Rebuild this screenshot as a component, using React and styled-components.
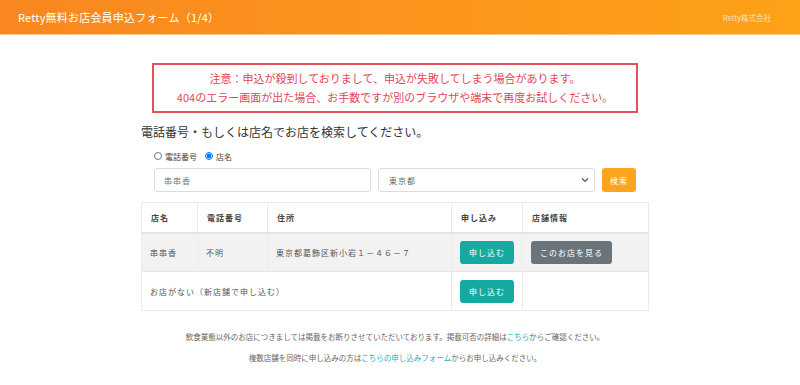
import React from 'react';
import styled, { createGlobalStyle } from 'styled-components';

const GlobalStyle = createGlobalStyle`
  html, body {
    margin: 0;
    padding: 0;
    background: #fff;
  }
  body {
    font-family: "Noto Sans CJK JP", "Noto Sans", "Liberation Sans", sans-serif;
    color: #333;
  }
  * { box-sizing: border-box; }
`;

const shops = [
  { name: '串串香', tel: '不明', address: '東京都葛飾区新小岩１－４６－７' },
];

function App() {
  return (
    <>
      <GlobalStyle />
      <Page>
        <TopBar>
          <Title>Retty無料お店会員申込フォーム（1/4）</Title>
          <Company>Retty株式会社</Company>
        </TopBar>

        <Main>
          <Alert>
            注意：申込が殺到しておりまして、申込が失敗してしまう場合があります。
            <br />
            404のエラー画面が出た場合、お手数ですが別のブラウザや端末で再度お試しください。
          </Alert>

          <Heading>電話番号・もしくは店名でお店を検索してください。</Heading>

          <SearchForm>
            <RadioRow>
              <RadioLabel>
                <Radio type="radio" name="type" value="tel" />
                電話番号
              </RadioLabel>
              <RadioLabel>
                <Radio type="radio" name="type" value="name" defaultChecked />
                店名
              </RadioLabel>
            </RadioRow>
            <FieldRow>
              <TextInput defaultValue="串串香" />
              <SelectBox>
                <span>東京都</span>
                <svg width="8" height="6" viewBox="0 0 8 6">
                  <path d="M1 1.5 L4 4.5 L7 1.5" fill="none" stroke="#555" strokeWidth="1.2" />
                </svg>
              </SelectBox>
              <SearchButton>検索</SearchButton>
            </FieldRow>
          </SearchForm>

          <ShopTable>
            <thead>
              <tr>
                <Th $w={56}>店名</Th>
                <Th $w={70}>電話番号</Th>
                <Th>住所</Th>
                <Th $w={69}>申し込み</Th>
                <Th $w={126}>店舗情報</Th>
              </tr>
            </thead>
            <tbody>
              {shops.map((s) => (
                <Row key={s.name} $striped>
                  <Td>{s.name}</Td>
                  <Td>{s.tel}</Td>
                  <Td>{s.address}</Td>
                  <Td><Button $variant="teal">申し込む</Button></Td>
                  <Td><Button $variant="gray">このお店を見る</Button></Td>
                </Row>
              ))}
              <Row>
                <Td colSpan={3}>お店がない（新店舗で申し込む）</Td>
                <Td><Button $variant="teal">申し込む</Button></Td>
                <Td />
              </Row>
            </tbody>
          </ShopTable>

          <Note>
            飲食業態以外のお店につきましては掲載をお断りさせていただいております。掲載可否の詳細は<Link>こちら</Link>からご確認ください。
          </Note>
          <Note>
            複数店舗を同時に申し込みの方は<Link>こちらの申し込みフォーム</Link>からお申し込みください。
          </Note>
        </Main>
      </Page>
    </>
  );
}

const Page = styled.div`
  min-height: 640px;
`;

const TopBar = styled.header`
  height: 35px;
  display: flex;
  align-items: center;
  justify-content: space-between;
  padding: 0 29px 0 18px;
  background: linear-gradient(90deg, #f8871f 0%, #fda118 100%);
  border-bottom: 1px solid #fcc98c;
  color: #fff;
`;

const Title = styled.div`
  font-size: 11px;
  letter-spacing: 0.2px;
`;

const Company = styled.div`
  font-size: 7.5px;
  color: #fde3c0;
`;

const Main = styled.main`
  width: 508px;
  margin: 0 0 0 calc(50% - 259px);
  padding: 28px 0 60px;
`;

const Alert = styled.div`
  margin: 0 11px;
  border: 2px solid #e3525f;
  padding: 4px 0;
  text-align: center;
  color: #e24658;
  font-size: 11px;
  line-height: 19px;
`;

const Heading = styled.h2`
  margin: 10px 0 0;
  font-size: 12px;
  font-weight: 400;
  line-height: 18px;
  color: #333;
`;

const SearchForm = styled.form`
  padding: 0 13px;
  margin-top: 9px;
`;

const RadioRow = styled.div`
  display: flex;
  gap: 8px;
  height: 12px;
  align-items: center;
`;

const RadioLabel = styled.label`
  display: flex;
  align-items: center;
  gap: 3px;
  font-size: 8px;
  color: #444;
`;

const Radio = styled.input`
  width: 8px;
  height: 8px;
  margin: 0;
  accent-color: #0075ff;
`;

const FieldRow = styled.div`
  display: flex;
  gap: 7px;
  margin-top: 6px;
  height: 24px;
`;

const TextInput = styled.input`
  width: 217px;
  height: 24px;
  border: 1px solid #dcdcdc;
  border-radius: 3px;
  padding: 0 9px;
  font-family: inherit;
  font-size: 8px;
  letter-spacing: 1px;
  color: #777;
  outline: none;
`;

const SelectBox = styled.div`
  width: 217px;
  height: 24px;
  border: 1px solid #dcdcdc;
  border-radius: 3px;
  padding: 0 5px 0 10px;
  display: flex;
  align-items: center;
  justify-content: space-between;
  font-size: 8px;
  letter-spacing: 1px;
  color: #666;
`;

const SearchButton = styled.button`
  width: 34px;
  height: 24px;
  border: none;
  border-radius: 3px;
  background: #fda41f;
  color: #fff;
  font-family: inherit;
  font-size: 8px;
  letter-spacing: 1px;
  padding: 0;
`;

const ShopTable = styled.table`
  width: 100%;
  margin-top: 10px;
  border-collapse: collapse;
  border: 1px solid #e9e9e9;
`;

const Th = styled.th`
  width: ${(p) => (p.$w ? `${p.$w}px` : 'auto')};
  height: 30px;
  padding: 0 9px;
  text-align: left;
  font-size: 8px;
  font-weight: 700;
  letter-spacing: 1px;
  color: #444;
  border-left: 1px solid #ececec;
  border-bottom: 2px solid #e3e5e8;
`;

const Row = styled.tr`
  height: 39px;
  background: ${(p) => (p.$striped ? '#f2f2f2' : '#fff')};
  border-top: 1px solid #e6e6e6;
`;

const Td = styled.td`
  padding: 0 8px;
  font-size: 8px;
  letter-spacing: 1px;
  color: #555;
  border-left: 1px solid #ececec;
  white-space: nowrap;
`;

const Button = styled.button`
  height: 23px;
  padding: 0 9px;
  border: none;
  border-radius: 3px;
  font-family: inherit;
  font-size: 8px;
  letter-spacing: 1px;
  white-space: nowrap;
  color: #fff;
  background: ${(p) => (p.$variant === 'teal' ? '#16a9a1' : '#6b737b')};
`;

const Note = styled.p`
  margin: 19px 0 0;
  text-align: center;
  font-size: 7.5px;
  line-height: 14px;
  color: #666;

  & + & {
    margin-top: 7px;
  }
`;

const Link = styled.a`
  color: #21b3b0;
  cursor: pointer;
`;

export default App;
